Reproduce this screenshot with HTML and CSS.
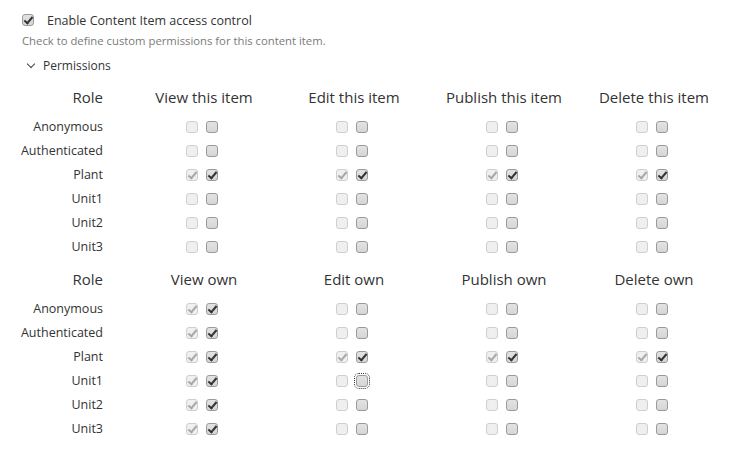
FILE: index.html
```html
<!DOCTYPE html>
<html>
<head>
<meta charset="utf-8">
<link rel="stylesheet" href="styles.css">
</head>
<body>
<div class="page">
  <div class="enable">
    <span class="cb on top"></span>
    <span class="enable-label">Enable Content Item access control</span>
  </div>
  <div class="hint">Check to define custom permissions for this content item.</div>
  <div class="perm-title"><span class="chev"></span>Permissions</div>

  <div class="grid">
    <div class="h role">Role</div><div class="h">View this item</div><div class="h">Edit this item</div><div class="h">Publish this item</div><div class="h">Delete this item</div>

    <div class="r">Anonymous</div>
    <div class="c"><span class="cb dis"></span><span class="cb"></span></div>
    <div class="c"><span class="cb dis"></span><span class="cb"></span></div>
    <div class="c"><span class="cb dis"></span><span class="cb"></span></div>
    <div class="c"><span class="cb dis"></span><span class="cb"></span></div>

    <div class="r">Authenticated</div>
    <div class="c"><span class="cb dis"></span><span class="cb"></span></div>
    <div class="c"><span class="cb dis"></span><span class="cb"></span></div>
    <div class="c"><span class="cb dis"></span><span class="cb"></span></div>
    <div class="c"><span class="cb dis"></span><span class="cb"></span></div>

    <div class="r">Plant</div>
    <div class="c"><span class="cb dis on"></span><span class="cb on"></span></div>
    <div class="c"><span class="cb dis on"></span><span class="cb on"></span></div>
    <div class="c"><span class="cb dis on"></span><span class="cb on"></span></div>
    <div class="c"><span class="cb dis on"></span><span class="cb on"></span></div>

    <div class="r">Unit1</div>
    <div class="c"><span class="cb dis"></span><span class="cb"></span></div>
    <div class="c"><span class="cb dis"></span><span class="cb"></span></div>
    <div class="c"><span class="cb dis"></span><span class="cb"></span></div>
    <div class="c"><span class="cb dis"></span><span class="cb"></span></div>

    <div class="r">Unit2</div>
    <div class="c"><span class="cb dis"></span><span class="cb"></span></div>
    <div class="c"><span class="cb dis"></span><span class="cb"></span></div>
    <div class="c"><span class="cb dis"></span><span class="cb"></span></div>
    <div class="c"><span class="cb dis"></span><span class="cb"></span></div>

    <div class="r">Unit3</div>
    <div class="c"><span class="cb dis"></span><span class="cb"></span></div>
    <div class="c"><span class="cb dis"></span><span class="cb"></span></div>
    <div class="c"><span class="cb dis"></span><span class="cb"></span></div>
    <div class="c"><span class="cb dis"></span><span class="cb"></span></div>

    <div class="h role second">Role</div><div class="h second">View own</div><div class="h second">Edit own</div><div class="h second">Publish own</div><div class="h second">Delete own</div>

    <div class="r">Anonymous</div>
    <div class="c"><span class="cb dis on"></span><span class="cb on"></span></div>
    <div class="c"><span class="cb dis"></span><span class="cb"></span></div>
    <div class="c"><span class="cb dis"></span><span class="cb"></span></div>
    <div class="c"><span class="cb dis"></span><span class="cb"></span></div>

    <div class="r">Authenticated</div>
    <div class="c"><span class="cb dis on"></span><span class="cb on"></span></div>
    <div class="c"><span class="cb dis"></span><span class="cb"></span></div>
    <div class="c"><span class="cb dis"></span><span class="cb"></span></div>
    <div class="c"><span class="cb dis"></span><span class="cb"></span></div>

    <div class="r">Plant</div>
    <div class="c"><span class="cb dis on"></span><span class="cb on"></span></div>
    <div class="c"><span class="cb dis on"></span><span class="cb on"></span></div>
    <div class="c"><span class="cb dis on"></span><span class="cb on"></span></div>
    <div class="c"><span class="cb dis on"></span><span class="cb on"></span></div>

    <div class="r">Unit1</div>
    <div class="c"><span class="cb dis on"></span><span class="cb on"></span></div>
    <div class="c"><span class="cb dis"></span><span class="cb focus"></span></div>
    <div class="c"><span class="cb dis"></span><span class="cb"></span></div>
    <div class="c"><span class="cb dis"></span><span class="cb"></span></div>

    <div class="r">Unit2</div>
    <div class="c"><span class="cb dis on"></span><span class="cb on"></span></div>
    <div class="c"><span class="cb dis"></span><span class="cb"></span></div>
    <div class="c"><span class="cb dis"></span><span class="cb"></span></div>
    <div class="c"><span class="cb dis"></span><span class="cb"></span></div>

    <div class="r">Unit3</div>
    <div class="c"><span class="cb dis on"></span><span class="cb on"></span></div>
    <div class="c"><span class="cb dis"></span><span class="cb"></span></div>
    <div class="c"><span class="cb dis"></span><span class="cb"></span></div>
    <div class="c"><span class="cb dis"></span><span class="cb"></span></div>
  </div>
</div>
</body>
</html>
```
FILE: styles.css
```css
* { box-sizing: border-box; }
html, body { margin: 0; background: #fff; }
body {
  font-family: "Open Sans", "Noto Sans", sans-serif;
  color: #333;
  font-size: 12px;
}
.page { padding: 12px 0 0 22px; }

.enable { display: flex; align-items: center; height: 16px; }
.enable-label { margin-left: 13px; font-size: 12.5px; }
.hint { margin-top: 5px; font-size: 11.3px; color: #7a7a7a; }
.perm-title { margin-top: 9px; display: flex; align-items: center; font-size: 12px; }
.chev {
  width: 6px; height: 6px;
  border-right: 1.3px solid #444; border-bottom: 1.3px solid #444;
  transform: rotate(45deg);
  margin: -3px 9px 0 6px;
}

.grid {
  margin-left: -22px;
  margin-top: 10px;
  display: grid;
  grid-template-columns: 129px repeat(4, 150px);
  grid-auto-rows: auto;
}
.h { font-size: 15px; text-align: center; line-height: 26px; height: 31px; }
.h.role { text-align: right; padding-right: 26px; }
.h.second { margin-top: 7px; }
.r { text-align: right; font-size: 12.5px; line-height: 24px; height: 24px; padding-right: 26px; }
.c { display: flex; justify-content: center; align-items: center; gap: 8px; padding-right: 4px; height: 24px; }

.cb {
  position: relative;
  width: 12px; height: 12px;
  border: 1px solid #9a9a9a;
  border-radius: 3px;
  background: linear-gradient(#e2e2e2, #d6d6d6);
  flex: none;
}
.cb.dis {
  border-color: #cfcfcf;
  background: #efefef;
}
.cb.on::after {
  content: "";
  position: absolute;
  left: 3px; top: 0px;
  width: 3px; height: 7px;
  border-right: 2.2px solid #333;
  border-bottom: 2.2px solid #333;
  transform: rotate(40deg);
}
.cb.dis.on::after { border-color: #a8a8a8; }
.cb.focus { outline: 1px dotted #333; outline-offset: 1px; }
```
